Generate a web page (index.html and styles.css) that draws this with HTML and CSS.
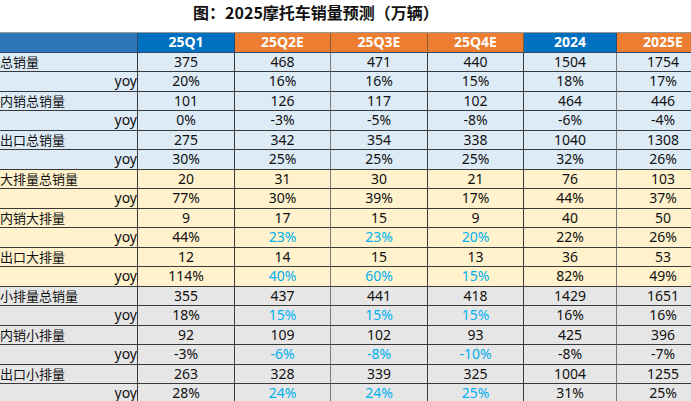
FILE: index.html
```html
<!DOCTYPE html>
<html lang="zh">
<head>
<meta charset="utf-8">
<link rel="stylesheet" href="styles.css">
</head>
<body>
<div class="title-wrap"><h1 class="title">图：2025摩托车销量预测（万辆）</h1></div>
<div class="table">
  <div class="row head">
    <div class="c lab hb0"></div><div class="c hb">25Q1</div><div class="c ho">25Q2E</div><div class="c ho">25Q3E</div><div class="c ho">25Q4E</div><div class="c hb">2024</div><div class="c ho">2025E</div>
  </div>
  <div class="row blue"><div class="c lab">总销量</div><div class="c">375</div><div class="c">468</div><div class="c">471</div><div class="c">440</div><div class="c">1504</div><div class="c">1754</div></div>
  <div class="row blue"><div class="c lab yoy">yoy</div><div class="c">20%</div><div class="c">16%</div><div class="c">16%</div><div class="c">15%</div><div class="c">18%</div><div class="c">17%</div></div>
  <div class="row blue"><div class="c lab">内销总销量</div><div class="c">101</div><div class="c">126</div><div class="c">117</div><div class="c">102</div><div class="c">464</div><div class="c">446</div></div>
  <div class="row blue"><div class="c lab yoy">yoy</div><div class="c">0%</div><div class="c">-3%</div><div class="c">-5%</div><div class="c">-8%</div><div class="c">-6%</div><div class="c">-4%</div></div>
  <div class="row blue"><div class="c lab">出口总销量</div><div class="c">275</div><div class="c">342</div><div class="c">354</div><div class="c">338</div><div class="c">1040</div><div class="c">1308</div></div>
  <div class="row blue"><div class="c lab yoy">yoy</div><div class="c">30%</div><div class="c">25%</div><div class="c">25%</div><div class="c">25%</div><div class="c">32%</div><div class="c">26%</div></div>
  <div class="row yel"><div class="c lab">大排量总销量</div><div class="c">20</div><div class="c">31</div><div class="c">30</div><div class="c">21</div><div class="c">76</div><div class="c">103</div></div>
  <div class="row yel"><div class="c lab yoy">yoy</div><div class="c">77%</div><div class="c">30%</div><div class="c">39%</div><div class="c">17%</div><div class="c">44%</div><div class="c">37%</div></div>
  <div class="row yel"><div class="c lab">内销大排量</div><div class="c">9</div><div class="c">17</div><div class="c">15</div><div class="c">9</div><div class="c">40</div><div class="c">50</div></div>
  <div class="row yel"><div class="c lab yoy">yoy</div><div class="c">44%</div><div class="c hl">23%</div><div class="c hl">23%</div><div class="c hl">20%</div><div class="c">22%</div><div class="c">26%</div></div>
  <div class="row yel"><div class="c lab">出口大排量</div><div class="c">12</div><div class="c">14</div><div class="c">15</div><div class="c">13</div><div class="c">36</div><div class="c">53</div></div>
  <div class="row yel"><div class="c lab yoy">yoy</div><div class="c">114%</div><div class="c hl">40%</div><div class="c hl">60%</div><div class="c hl">15%</div><div class="c">82%</div><div class="c">49%</div></div>
  <div class="row grey"><div class="c lab">小排量总销量</div><div class="c">355</div><div class="c">437</div><div class="c">441</div><div class="c">418</div><div class="c">1429</div><div class="c">1651</div></div>
  <div class="row grey"><div class="c lab yoy">yoy</div><div class="c">18%</div><div class="c hl">15%</div><div class="c hl">15%</div><div class="c hl">15%</div><div class="c">16%</div><div class="c">16%</div></div>
  <div class="row grey"><div class="c lab">内销小排量</div><div class="c">92</div><div class="c">109</div><div class="c">102</div><div class="c">93</div><div class="c">425</div><div class="c">396</div></div>
  <div class="row grey"><div class="c lab yoy">yoy</div><div class="c">-3%</div><div class="c hl">-6%</div><div class="c hl">-8%</div><div class="c hl">-10%</div><div class="c">-8%</div><div class="c">-7%</div></div>
  <div class="row grey"><div class="c lab">出口小排量</div><div class="c">263</div><div class="c">328</div><div class="c">339</div><div class="c">325</div><div class="c">1004</div><div class="c">1255</div></div>
  <div class="row grey"><div class="c lab yoy">yoy</div><div class="c">28%</div><div class="c hl">24%</div><div class="c hl">24%</div><div class="c hl">25%</div><div class="c">31%</div><div class="c">25%</div></div>
</div>
</body>
</html>
```
FILE: styles.css
```css
html, body {
  margin: 0;
  padding: 0;
  background: #ffffff;
  overflow: hidden;
}
body {
  width: 691px;
  height: 401px;
  font-family: "Noto Sans", "Noto Sans CJK SC", sans-serif;
  color: #111111;
}
.title-wrap {
  width: 632px;
  height: 32px;
  display: flex;
  justify-content: center;
  align-items: center;
}
.title {
  margin: 0;
  font-size: 16px;
  font-weight: 700;
  font-family: "Noto Sans CJK SC", "Noto Sans", sans-serif;
  line-height: 20px;
  color: #111111;
  padding-bottom: 9px;
}
.table {
  width: 710px;
  border-top: 1px solid #9a9a9a;
}
.row {
  display: grid;
  grid-template-columns: 138px 97px 96px 97px 96px 93px 93px;
  height: 19.5px;
}
.c {
  box-sizing: border-box;
  border-right: 1px solid #3a3a3a;
  border-bottom: 1px solid #3a3a3a;
  font-size: 14px;
  line-height: 18px;
  text-align: center;
  white-space: nowrap;
  overflow: hidden;
}
.c:nth-child(3), .c:nth-child(6) {
  border-right-color: #7a7a7a;
}
.lab {
  text-align: left;
  padding-left: 0;
  font-size: 13px;
  line-height: 19px;
}
.yoy {
  text-align: right;
  padding-right: 0;
  font-size: 14px;
  line-height: 18px;
}
.head .c {
  color: #ffffff;
  font-weight: 700;
  border-color: #2b4a6a;
}
.hb0 { background: #2e75b6; }
.hb { background: #0070c0; }
.ho { background: #ed7d31; border-right-color: #8a5a30 !important; }
.blue .c { background: #ddebf7; }
.yel .c { background: #fff2cc; }
.grey .c { background: #e7e6e6; }
.hl { color: #00b0f0; }
```
